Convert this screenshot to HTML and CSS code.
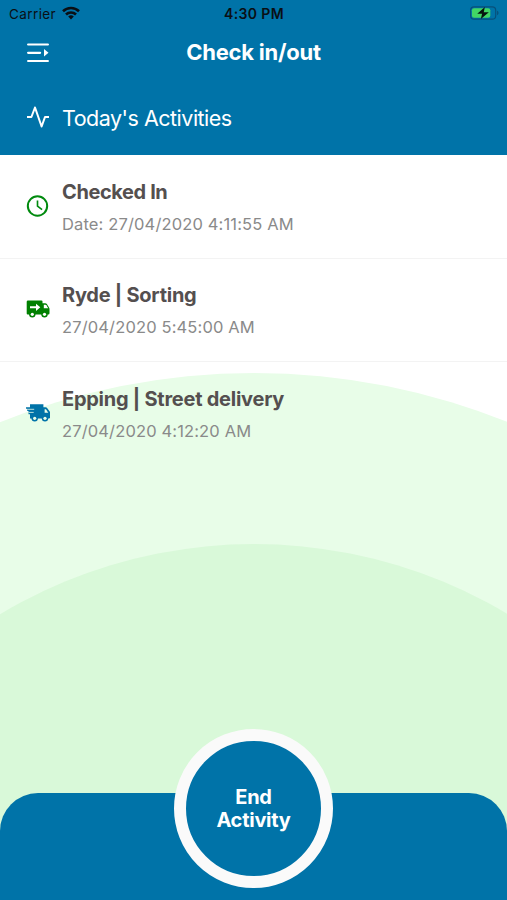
FILE: index.html
```
<!DOCTYPE html>
<html lang="en">
<head>
    <meta charset="UTF-8">
    <meta name="viewport" content="width=device-width, initial-scale=1.0">
    <title>Check in/out</title>
    <link rel="stylesheet" href="styles.css">
</head>
<body>
    <div class="screen">
        <div class="hill hill-back"></div>
        <div class="hill hill-front"></div>

        <header class="header">
            <div class="status-bar">
                <div class="carrier">
                    <span>Carrier</span>
                    <svg class="wifi" viewBox="0 0 18 14" fill="none" stroke="#0a0f14" stroke-width="2.6">
                        <path d="M1 5.3a11.5 11.5 0 0 1 16 0"/>
                        <path d="M4 8.5a7.1 7.1 0 0 1 10 0"/>
                        <path d="M9 13.4l-2.8-2.9a4 4 0 0 1 5.6 0z" fill="#0a0f14" stroke="none"/>
                    </svg>
                </div>
                <div class="time">4:30 PM</div>
                <svg class="battery" viewBox="0 0 30 14">
                    <rect x="0.6" y="0.6" width="26" height="12.8" rx="3.6" fill="none" stroke="#07507a" stroke-width="1.2"/>
                    <rect x="2" y="2" width="19" height="10" rx="2.2" fill="#42d665"/>
                    <path d="M28 4.8c2 .7 2 3.7 0 4.4z" fill="#07507a"/>
                    <path d="M15.4.8L7.5 7.8h5l-1.3 5.4 8.3-7.1h-5.3z" fill="#06140e"/>
                </svg>
            </div>

            <div class="nav">
                <svg class="menu-icon" viewBox="0 0 22 20" fill="none" stroke="#fff" stroke-width="2.2" stroke-linecap="round">
                    <path d="M1.100 1.500h19.800M1.100 9.800h12M1.100 18h19.800"/>
                    <path d="M17 6l4.500 3.800-4.500 3.800z" fill="#fff" stroke="none"/>
                </svg>
                <h1>Check in/out</h1>
            </div>

            <div class="section-title">
                <svg class="pulse-icon" viewBox="0 0 24 24" fill="none" stroke="#fff" stroke-width="2">
                    <path d="M23 12h-4l-3.400 9.500L9 2.500 5.400 12H1" stroke-linejoin="round"/>
                </svg>
                <h2>Today's Activities</h2>
            </div>
        </header>

        <ul class="activities">
            <li class="activity">
                <svg class="icon clock" viewBox="0 0 24 24" fill="none" stroke="#008a0e" stroke-width="2.1">
                    <circle cx="12" cy="12" r="10.100"/>
                    <path d="M12 6.300v5.900l4.800 3.600" stroke-width="1.700"/>
                </svg>
                <div class="info">
                    <h3 class="checked">Checked In</h3>
                    <p>Date: 27/04/2020 4:11:55 AM</p>
                </div>
            </li>
            <li class="activity">
                <svg class="icon truck" viewBox="0 0 24 24" fill="#008000">
                    <path d="M2 4.500h13.500a1 1 0 0 1 1 1v1.700h2.700c.7 0 1.300.300 1.700.9l2.100 3.400c.3.400.5.900.5 1.400v4.300a1.200 1.200 0 0 1-1.200 1.200H1.700a1 1 0 0 1-1-1V5.800A1.300 1.300 0 0 1 2 4.500z"/>
                    <path d="M17.800 8.800h1.700c.3 0 .6.200.8.400l2 3.100h-4.500z" fill="#fff"/>
                    <path d="M4 10.300h6V7.700l4.300 3.600-4.300 3.600v-2.600H4z" fill="#fff"/>
                    <circle cx="6.300" cy="18.300" r="3.200"/>
                    <circle cx="18.500" cy="18.300" r="3.200"/>
                    <circle cx="6.300" cy="18.300" r="1.600" fill="#fff"/>
                    <circle cx="18.500" cy="18.300" r="1.600" fill="#fff"/>
                </svg>
                <div class="info">
                    <h3>Ryde | Sorting</h3>
                    <p>27/04/2020 5:45:00 AM</p>
                </div>
            </li>
            <li class="activity">
                <svg class="icon truck" viewBox="0 0 24 24" fill="#0073a8">
                    <path d="M4 4.300h13.400v3h2.200c.7 0 1.300.300 1.700.9l2.400 3.300c.3.400.5.900.5 1.400v4.300c0 .8-.5 1.200-1.200 1.200H4V14.200H2.500V11H1.200V8.800H0V7.300h4z"/>
                    <path d="M1.200 9.300h7M2.500 12.400h5.200" stroke="#e8fde8" stroke-width=".8"/>
                    <path d="M18.600 9.200h1.300l2.400 3.500h-3.700z" fill="#e8fde8"/>
                    <circle cx="8.700" cy="18.300" r="3.200"/>
                    <circle cx="19" cy="18.300" r="3.200"/>
                    <circle cx="8.700" cy="18.300" r="1.600" fill="#e8fde8"/>
                    <circle cx="19" cy="18.300" r="1.600" fill="#e8fde8"/>
                </svg>
                <div class="info">
                    <h3>Epping | Street delivery</h3>
                    <p>27/04/2020 4:12:20 AM</p>
                </div>
            </li>
        </ul>

        <footer class="footer">
            <button type="button" class="end-btn">End<br>Activity</button>
        </footer>
    </div>
</body>
</html>
```
FILE: styles.css
```
:root {
    --primary: #0073a8;
    --hill-back: #e8fde8;
    --hill-front: #d9f9d9;
    --title: #544f4f;
    --muted: #8a8a8a;
}

* {
    margin: 0;
    padding: 0;
    box-sizing: border-box;
    font-family: Inter, 'Liberation Sans', sans-serif;
}

.screen {
    position: relative;
    display: flex;
    flex-direction: column;
    height: 900px;
    overflow: hidden;
    background-color: #fff;
}

/* Background circles behind the list */
.hill {
    position: absolute;
    left: 50%;
    border-radius: 50%;
    transform: translateX(-50%);
}

.hill-back {
    top: 373px;
    width: 1360px;
    height: 1360px;
    background-color: var(--hill-back);
}

.hill-front {
    top: 544px;
    width: 988px;
    height: 988px;
    background-color: var(--hill-front);
}

.header {
    position: relative;
    height: 155px;
    background-color: var(--primary);
    color: #fff;
}

.status-bar {
    display: grid;
    grid-template-columns: 1fr auto 1fr;
    align-items: center;
    height: 27px;
    padding: 0 8px 0 9px;
    color: #0a0f14;
    font-size: 13.5px;
}

.carrier {
    display: flex;
    align-items: center;
    gap: 6px;
    letter-spacing: 0.4px;
}

.wifi {
    width: 18px;
    height: 14px;
    margin-top: -2px;
}

.time {
    font-weight: 600;
    font-size: 14px;
    letter-spacing: 0.35px;
}

.battery {
    justify-self: end;
    width: 29px;
    height: 14px;
    margin-top: -1px;
}

.nav {
    display: grid;
    grid-template-columns: 60px 1fr 60px;
    align-items: center;
    height: 50px;
}

.menu-icon {
    width: 22px;
    height: 20px;
    margin: 1px 0 0 27px;
}

.nav h1 {
    font-size: 22px;
    font-weight: 650;
    letter-spacing: -0.25px;
    text-align: center;
}

.section-title {
    display: flex;
    align-items: center;
    gap: 12px;
    height: 80px;
    padding: 2px 0 0 26px;
}

.pulse-icon {
    width: 24px;
    height: 24px;
    margin-top: -3px;
}

.section-title h2 {
    font-size: 21.5px;
    font-weight: 400;
    letter-spacing: -0.5px;
}

.activities {
    position: relative;
    list-style: none;
}

.activity {
    display: flex;
    align-items: center;
    gap: 12px;
    height: 103.5px;
    padding-left: 26px;
    border-bottom: 1px solid #f3f3f3;
}

.activity:last-child {
    border-bottom: none;
}

.icon {
    width: 24px;
    height: 24px;
}

.clock {
    width: 23px;
    margin-right: 1px;
}

.truck {
    margin-top: -4px;
}

.info {
    padding-top: 3px;
}

.info h3 {
    color: var(--title);
    font-size: 20px;
    font-weight: 650;
    letter-spacing: -0.25px;
    line-height: 32px;
}

.info .checked {
    letter-spacing: -0.4px;
}

.info p {
    color: var(--muted);
    font-size: 16.5px;
    letter-spacing: 0.14px;
    line-height: 32px;
}

.footer {
    position: relative;
    display: flex;
    justify-content: center;
    height: 107px;
    margin-top: auto;
    border-radius: 38px 38px 0 0;
    background-color: var(--primary);
}

.end-btn {
    width: 159px;
    height: 159px;
    margin-top: -64px;
    border: 12px solid #fafafa;
    border-radius: 50%;
    background-color: var(--primary);
    color: #fff;
    font-size: 20px;
    font-weight: 650;
    letter-spacing: -0.25px;
    line-height: 23px;
}
```
